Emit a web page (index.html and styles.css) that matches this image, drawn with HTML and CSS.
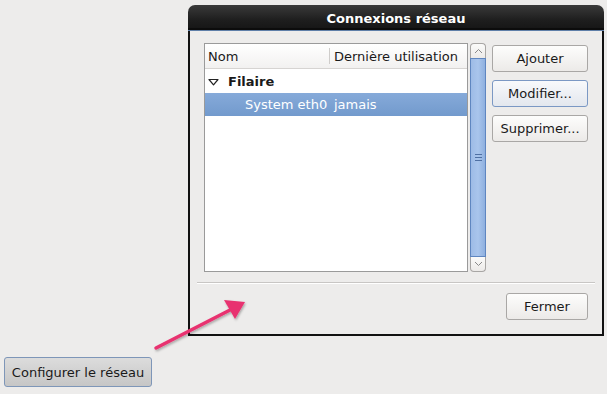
FILE: index.html
```html
<!DOCTYPE html>
<html lang="fr">
<head>
<meta charset="utf-8">
<link rel="stylesheet" href="styles.css">
</head>
<body>
<div class="desk">
  <div class="dialog">
    <div class="titlebar">Connexions réseau</div>
    <div class="body">
      <div class="main">
        <div class="tree">
          <div class="thead">
            <div class="th c1">Nom</div>
            <div class="th c2">Dernière utilisation</div>
          </div>
          <div class="row group">
            <span class="expander"><svg width="11" height="8" viewBox="0 0 11 8"><path d="M1 1.5 H10 L5.5 6.8 Z" fill="none" stroke="#222" stroke-width="1.2" stroke-linejoin="round"/></svg></span>
            <span class="gname">Filaire</span>
          </div>
          <div class="row sel">
            <span class="cname">System eth0</span>
            <span class="cdate">jamais</span>
          </div>
        </div>
        <div class="scroll">
          <div class="sbtn up"><svg width="9" height="6" viewBox="0 0 9 6"><path d="M1 5 L4.5 1.5 L8 5" fill="none" stroke="#8a8a8a" stroke-width="1"/></svg></div>
          <div class="slider"><span class="grip"></span></div>
          <div class="sbtn down"><svg width="9" height="6" viewBox="0 0 9 6"><path d="M1 1 L4.5 4.5 L8 1" fill="none" stroke="#8a8a8a" stroke-width="1"/></svg></div>
        </div>
        <div class="actions">
          <button class="btn">Ajouter</button>
          <button class="btn focus">Modifier...</button>
          <button class="btn">Supprimer...</button>
        </div>
      </div>
      <div class="sep"></div>
      <div class="footer">
        <button class="btn close">Fermer</button>
      </div>
    </div>
  </div>
  <button class="config">Configurer le réseau</button>
  <svg class="arrow" width="607" height="394" viewBox="0 0 607 394">
    <defs>
      <filter id="sh" x="-20%" y="-20%" width="140%" height="140%">
        <feDropShadow dx="1" dy="1.5" stdDeviation="1.2" flood-color="#000" flood-opacity="0.3"/>
      </filter>
    </defs>
    <g filter="url(#sh)">
      <line x1="156" y1="348" x2="230" y2="310" stroke="#e8336f" stroke-width="3.5" stroke-linecap="round"/>
      <path d="M245 302 L224 300 L235 319 Z" fill="#e8336f"/>
    </g>
  </svg>
</div>
</body>
</html>
```

FILE: styles.css
```css
* { box-sizing: border-box; }
html, body { margin: 0; padding: 0; }
body {
  background: #edeceb;
  font-family: "DejaVu Sans", sans-serif;
  font-size: 13px;
  color: #1a1a1a;
}
.desk {
  position: relative;
  width: 607px;
  height: 394px;
  overflow: hidden;
}
.dialog {
  position: absolute;
  left: 188px;
  top: 5px;
  width: 416px;
  height: 331px;
  display: flex;
  flex-direction: column;
}
.titlebar {
  height: 26px;
  background: linear-gradient(#3a3a3a, #1e1e1e 60%, #151515);
  border-radius: 7px 7px 0 0;
  color: #fff;
  font-weight: bold;
  font-size: 13px;
  display: flex;
  align-items: center;
  justify-content: center;
  padding-top: 1px;
  border-bottom: 1px solid #5f7fa8;
  box-shadow: inset 0 -2px 0 #0c0c0c;
}
.body {
  flex: 1;
  background: #edeceb;
  border: 2px solid #111;
  border-top: none;
  display: flex;
  flex-direction: column;
  padding: 12px 14px 0 14px;
}
.main {
  display: flex;
  height: 229px;
}
.tree {
  width: 264px;
  background: #fff;
  border: 1px solid #9a9a9a;
  display: flex;
  flex-direction: column;
}
.thead {
  display: flex;
  height: 25px;
  background: linear-gradient(#ffffff, #f2f1f0);
  border-bottom: 1px solid #d6d4d2;
}
.th {
  display: flex;
  align-items: center;
  padding-left: 3px;
}
.c1 { width: 125px; position: relative; }
.c1::after {
  content: "";
  position: absolute;
  right: 0;
  top: 4px;
  bottom: 4px;
  width: 1px;
  background: #cfcdcb;
}
.c2 { padding-left: 4px; }
.row {
  height: 24px;
  display: flex;
  align-items: center;
}
.group { padding-left: 3px; }
.expander { width: 20px; display: flex; align-items: center; padding-top: 1px; }
.gname { font-weight: bold; font-size: 13px; }
.sel {
  background: linear-gradient(#86aad9, #729acd);
  color: #fff;
  height: 23px;
}
.cname { padding-left: 40px; width: 129px; }
.cdate { padding-left: 0; }
.scroll {
  width: 16px;
  margin-left: 2px;
  display: flex;
  flex-direction: column;
}
.sbtn {
  height: 15px;
  background: linear-gradient(#fbfbfa, #eceae8);
  border: 1px solid #a8a6a4;
  display: flex;
  align-items: center;
  justify-content: center;
}
.up { border-radius: 4px 4px 0 0; border-bottom: none; }
.down { border-radius: 0 0 4px 4px; border-top: none; }
.slider {
  flex: 1;
  background: linear-gradient(90deg, #9dbbe6, #a9c5ec 50%, #8fb0df);
  border: 1px solid #5f86c0;
  display: flex;
  align-items: center;
  justify-content: center;
}
.grip {
  width: 7px;
  height: 7px;
  border-top: 1px solid #4f70a3;
  border-bottom: 1px solid #4f70a3;
  position: relative;
}
.grip::after {
  content: "";
  position: absolute;
  left: 0; right: 0; top: 2px;
  height: 1px;
  background: #4f70a3;
}
.actions {
  display: flex;
  flex-direction: column;
  gap: 8px;
  margin-left: 6px;
  padding-top: 2px;
}
.btn {
  font-family: "DejaVu Sans", sans-serif;
  font-size: 13px;
  color: #1a1a1a;
  width: 96px;
  height: 27px;
  border: 1px solid #a9a7a5;
  border-radius: 3px;
  background: linear-gradient(#fdfdfc, #eceae8);
  padding: 0;
  display: flex;
  align-items: center;
  justify-content: center;
}
.btn.focus {
  border-color: #7b98c4;
  background: linear-gradient(#f8f9fb, #e3e7ee);
}
.sep {
  margin: 10px -7px 0 -7px;
  height: 2px;
  border-top: 1px solid #c8c6c4;
  border-bottom: 1px solid #ffffff;
}
.footer {
  display: flex;
  justify-content: flex-end;
  padding-top: 9px;
  padding-right: 0;
}
.btn.close { width: 82px; }
.config {
  position: absolute;
  left: 4px;
  top: 357px;
  width: 148px;
  height: 30px;
  font-family: "DejaVu Sans", sans-serif;
  font-size: 13px;
  color: #1a1a1a;
  border: 1px solid #7e96b8;
  border-radius: 3px;
  background: linear-gradient(#dcdcdc, #c6c6c6);
  padding: 0;
}
.arrow {
  position: absolute;
  left: 0;
  top: 0;
  pointer-events: none;
}
```
